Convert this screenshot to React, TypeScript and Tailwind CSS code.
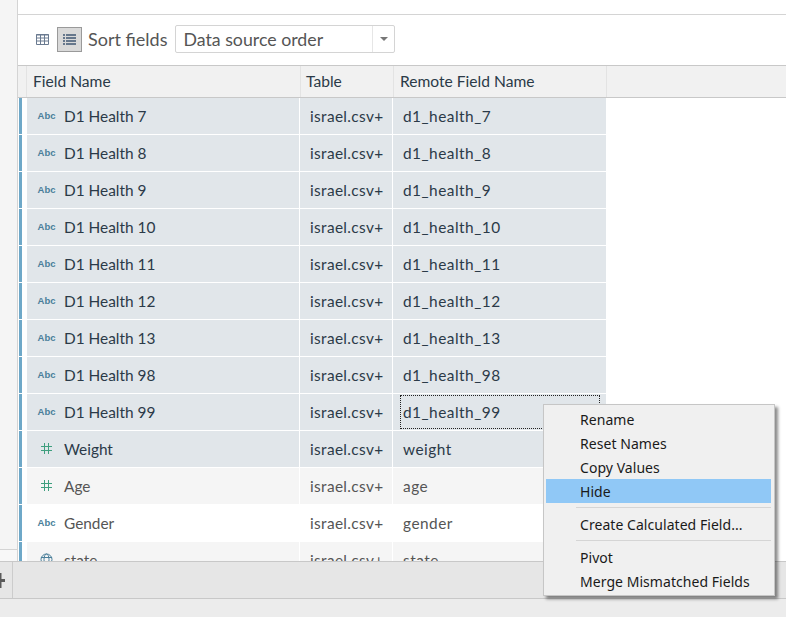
const FONT = "font-['Lato','Open_Sans',sans-serif]";

type Row = {
  name: string;
  remote: string;
  kind: "abc" | "num" | "geo";
  tone: "selected" | "grey" | "white";
};

const HEALTH = ["7", "8", "9", "10", "11", "12", "13", "98", "99"];

const ROWS: Row[] = [
  ...HEALTH.map((n): Row => ({
    name: `D1 Health ${n}`,
    remote: `d1_health_${n}`,
    kind: "abc",
    tone: "selected",
  })),
  { name: "Weight", remote: "weight", kind: "num", tone: "selected" },
  { name: "Age", remote: "age", kind: "num", tone: "grey" },
  { name: "Gender", remote: "gender", kind: "abc", tone: "white" },
  { name: "state", remote: "state", kind: "geo", tone: "grey" },
];

const TONES = {
  selected: "bg-[#e1e6ea] text-[#2b3a48]",
  grey: "bg-[#f5f5f5] text-[#555555]",
  white: "bg-white text-[#555555]",
};

function GridIcon() {
  return (
    <svg width="13" height="11" viewBox="0 0 13 11" fill="#ffffff" stroke="#6a7a90">
      <path d="M.5.5h12v10H.5z" />
      <path d="M0 1h13M0 4h13M0 7h13M4.5 0v11M8.5 0v11" fill="none" />
    </svg>
  );
}

function ListIcon() {
  return (
    <svg width="13" height="11" viewBox="0 0 13 11" fill="#66778c">
      <path d="M0 0h2v2H0zM3 0h10v2H3zM0 3h2v2H0zM3 3h10v2H3zM0 6h2v2H0zM3 6h10v2H3zM0 9h2v2H0zM3 9h10v2H3z" />
    </svg>
  );
}

function NumIcon() {
  return (
    <svg width="11" height="11" viewBox="0 0 11 11" fill="none" stroke="#3f9f7f" className="-mt-[2px]">
      <path d="M3.5 0v11M7.5 0v11M0 3.5h11M0 7.5h11" />
    </svg>
  );
}

function GeoIcon() {
  return (
    <svg width="13" height="13" viewBox="0 0 13 13" fill="none" stroke="#4a7f9a" className="-mt-px">
      <circle cx="6.5" cy="6.5" r="5.5" />
      <ellipse cx="6.5" cy="6.5" rx="2.5" ry="5.5" />
      <path d="M1 4.5h11M1 8.5h11" />
    </svg>
  );
}

function FieldIcon({ kind }: { kind: Row["kind"] }) {
  if (kind === "num") return <NumIcon />;
  if (kind === "geo") return <GeoIcon />;
  return <span className="font-['Liberation_Sans',sans-serif] text-[9.5px] font-bold text-[#4a7f9a]">Abc</span>;
}

function FieldRow({ row, focused }: { row: Row; focused: boolean }) {
  return (
    <div className="flex h-[37px] shrink-0 pb-px text-[15.4px]">
      <div className="ml-px w-[3px] bg-[#6ea8c8]" />
      <div className="w-[5px]" />
      <div className={`flex w-[579px] ${TONES[row.tone]}`}>
        <div className="flex w-[273px] items-center border-r border-white">
          <div className="flex w-[37px] justify-center pl-[2px]">
            <FieldIcon kind={row.kind} />
          </div>
          <span className="mt-[2px]">{row.name}</span>
        </div>
        <div className="flex w-[93px] items-center border-r border-white pl-[10px] pt-[2px] tracking-[0.35px]">israel.csv+</div>
        <div className="flex flex-1 items-center py-px pl-[7px] tracking-[0.5px]">
          {focused ? (
            <div className="flex h-full w-[200px] items-center border border-dotted border-[#222222] pl-[2px]">
              <span className="mt-[2px]">{row.remote}</span>
            </div>
          ) : (
            <span className="mt-[2px] pl-[3px]">{row.remote}</span>
          )}
        </div>
      </div>
    </div>
  );
}

function MenuItem({ label, active }: { label: string; active?: boolean }) {
  return (
    <div className={`flex h-6 items-center pl-[34px] ${active ? "bg-[#90c8f6]" : ""}`}>{label}</div>
  );
}

function ContextMenu() {
  return (
    <div className="absolute left-[543px] top-[404px] w-[232px] border border-[#c6c6c6] bg-[#f0f0f0] py-[2px] pl-[2px] pr-[3px] font-['Noto_Sans',sans-serif] text-[14px] tracking-[0.05px] text-[#1a1a1a] shadow-[3px_3px_3px_rgba(0,0,0,0.45)]">
      <MenuItem label="Rename" />
      <MenuItem label="Reset Names" />
      <MenuItem label="Copy Values" />
      <MenuItem label="Hide" active />
      <div className="my-[4px] ml-[30px] h-px bg-[#d5d5d5]" />
      <MenuItem label="Create Calculated Field..." />
      <div className="my-[4px] ml-[30px] h-px bg-[#d5d5d5]" />
      <MenuItem label="Pivot" />
      <MenuItem label="Merge Mismatched Fields" />
    </div>
  );
}

export default function App() {
  return (
    <div className={`relative flex h-[617px] w-[786px] flex-col overflow-hidden bg-white ${FONT}`}>
      <div className="flex min-h-0 flex-1">
        <aside className="flex w-[18px] shrink-0 flex-col border-r border-[#d4d4d4] bg-[#f5f5f5]">
          <div className="flex-1" />
          <div className="h-[12px] border-t border-[#d4d4d4] bg-[#f8f8f8]" />
        </aside>
        <main className="flex min-w-0 flex-1 flex-col">
          <div className="h-[15px] shrink-0 border-b border-[#d4d4d4]" />
          <div className="flex h-[50px] shrink-0 items-center pb-[2px] pl-[18px]">
            <GridIcon />
            <div className="ml-[8px] flex h-[25px] w-[25px] items-center justify-center border border-[#9a9a9a] bg-[#d9d9d9]">
              <ListIcon />
            </div>
            <span className="ml-[6px] text-[18px] text-[#555555]">Sort fields</span>
            <div className="ml-[8px] flex h-7 w-[220px] items-center rounded-[2px] border border-[#d4d4d4] pl-[7px] text-[17.75px] text-[#555555]">
              <span className="flex-1">Data source order</span>
              <div className="flex h-full w-[22px] items-center justify-center border-l border-[#e6e6e6]">
                <div className="h-0 w-0 border-x-[4px] border-t-[4px] border-x-transparent border-t-[#777777]" />
              </div>
            </div>
          </div>
          <div className="flex h-[33px] shrink-0 border-y border-[#c8c8c8] bg-[#f1f1f1] text-[15.6px] text-[#2b3a48]">
            <div className="w-[9px] border-r border-[#e3e3e3]" />
            <div className="flex w-[274px] items-center border-r border-[#e3e3e3] pl-[6px]">Field Name</div>
            <div className="flex w-[93px] items-center border-r border-[#e3e3e3] pl-[5px]">Table</div>
            <div className="flex w-[213px] items-center border-r border-[#e3e3e3] pl-[6px]">Remote Field Name</div>
          </div>
          <div className="flex min-h-0 flex-1 flex-col overflow-hidden">
            {ROWS.map((row) => (
              <FieldRow key={row.name} row={row} focused={row.name === "D1 Health 99"} />
            ))}
          </div>
        </main>
      </div>
      <div className="flex h-[38px] shrink-0 border-y border-[#c8c8c8] bg-[#e6e6e6]">
        <div className="flex w-[13px] items-center overflow-hidden border-r border-[#cccccc]">
          <svg width="5" height="15" viewBox="0 0 5 15" className="shrink-0" fill="none" stroke="#5a5a5a" strokeWidth="3">
            <path d="M0 0v15M0 7.5h5" />
          </svg>
        </div>
      </div>
      <div className="h-[18px] shrink-0 bg-[#ececec]" />
      <ContextMenu />
    </div>
  );
}
